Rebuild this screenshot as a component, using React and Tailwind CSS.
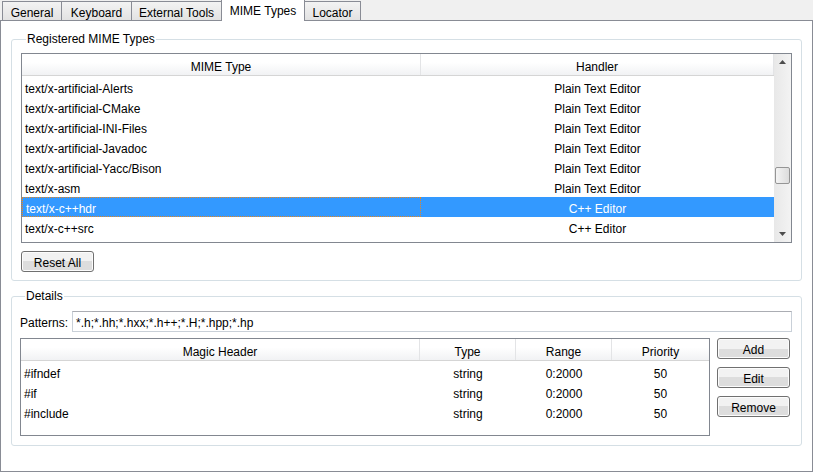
import React from "react";

const F = { fontFamily: '"Liberation Sans", Arial, sans-serif' };

function Tab({ label, w, selected }) {
  if (selected)
    return (
      <div className={`-ml-px relative z-10 h-[22px] ${w} border border-b-0 border-[#898c95] bg-white flex items-center justify-center pt-[1px] pb-[1px] text-black`}>
        {label}
      </div>
    );
  return (
    <div className={`-ml-px h-[19px] ${w} border border-b-0 border-[#898c95] bg-gradient-to-b from-[#f3f3f3] to-[#e2e2e2] flex items-center justify-center pt-[3px] text-black`}>
      {label}
    </div>
  );
}

function Header({ cols }) {
  return (
    <div className="flex h-[22px] border-b border-[#d5d5d5] bg-gradient-to-b from-white from-40% to-[#f1f2f4]">
      {cols.map((c, i) => (
        <div key={i} className={`${c.w} flex items-center justify-center pt-[4px] border-r border-[#e3e4e6] text-black`}>
          {c.label}
        </div>
      ))}
    </div>
  );
}

function Button({ children, w = "w-[73px]" }) {
  return (
    <div className={`${w} h-[21px] rounded-[3px] border border-[#707070] bg-gradient-to-b from-[#f2f2f2] from-50% to-[#dddddd] to-50% flex items-center justify-center pt-[2px] text-black shadow-[inset_0_0_0_1px_#fcfcfc]`}>
      {children}
    </div>
  );
}

const mimeRows = [
  ["text/x-artificial-Alerts", "Plain Text Editor"],
  ["text/x-artificial-CMake", "Plain Text Editor"],
  ["text/x-artificial-INI-Files", "Plain Text Editor"],
  ["text/x-artificial-Javadoc", "Plain Text Editor"],
  ["text/x-artificial-Yacc/Bison", "Plain Text Editor"],
  ["text/x-asm", "Plain Text Editor"],
  ["text/x-c++hdr", "C++ Editor", true],
  ["text/x-c++src", "C++ Editor"],
];

const magicRows = [
  ["#ifndef", "string", "0:2000", "50"],
  ["#if", "string", "0:2000", "50"],
  ["#include", "string", "0:2000", "50"],
];

export default function App() {
  return (
    <div style={F} className="w-[813px] h-[472px] bg-[#f0f0f0] text-[12px] leading-[14px] flex flex-col overflow-hidden">
      {/* Tabs */}
      <div className="h-[20px] flex items-end pl-[3px] relative z-10">
        <Tab label="General" w="w-[60px]" />
        <Tab label="Keyboard" w="w-[71px]" />
        <Tab label="External Tools" w="w-[91px]" />
        <div className="-mb-[1px] flex">
          <Tab label="MIME Types" w="w-[84px]" selected />
        </div>
        <Tab label="Locator" w="w-[57px]" />
      </div>
      {/* Pane */}
      <div className="w-[813px] h-[452px] border border-[#898c95] bg-white px-[10px] pt-[11px]">
        <fieldset className="border border-[#d5dfe5] rounded-[3px] px-[9px] pb-[8px] pt-[7px]">
          <legend className="ml-[5px] px-[1px] text-black">Registered MIME Types</legend>
          <div className="h-[190px] border border-[#828790] flex">
            <div className="flex-1 flex flex-col">
              <Header cols={[{ label: "MIME Type", w: "w-[399px]" }, { label: "Handler", w: "flex-1" }]} />
              <div className="pt-[1px]">
                {mimeRows.map(([a, b, sel], i) => (
                  <div key={i} className={`h-[20px] flex items-center ${sel ? "bg-[#3399ff] text-white" : "text-black"}`}>
                    <div className={`w-[399px] h-full flex items-center pl-[3px] pt-[4px] ${sel ? "border border-dotted border-[#e8871e]" : ""}`}>{a}</div>
                    <div className="flex-1 h-full flex items-center justify-center pt-[4px]">{b}</div>
                  </div>
                ))}
              </div>
            </div>
            {/* Scrollbar */}
            <div className="w-[17px] bg-gradient-to-r from-[#e8e8e8] to-[#f3f3f3] flex flex-col items-center justify-between py-[6px] relative">
              <svg width="7" height="4" viewBox="0 0 7 4"><path d="M0 4 L3.5 0 L7 4 Z" fill="#4d4d4d" /></svg>
              <svg width="7" height="4" viewBox="0 0 7 4"><path d="M0 0 L3.5 4 L7 0 Z" fill="#4d4d4d" /></svg>
              <div className="absolute left-[1px] top-[113px] w-[15px] h-[17px] rounded-[2px] border border-[#959595] bg-gradient-to-r from-[#f4f4f4] to-[#dcdcdc]" />
            </div>
          </div>
          <div className="mt-[8px]">
            <Button>Reset All</Button>
          </div>
        </fieldset>

        <fieldset className="mt-[8px] border border-[#d5dfe5] rounded-[3px] pl-[8px] pr-[9px] pb-[9px] pt-[8px]">
          <legend className="ml-[5px] px-[1px] text-black">Details</legend>
          <div className="flex items-center h-[21px]">
            <div className="w-[52px] pt-[3px] text-black">Patterns:</div>
            <div className="flex-1 h-[21px] border border-[#c9d0d8] border-t-[#abadb3] flex items-center pl-[3px] pt-[3px] text-black">
              *.h;*.hh;*.hxx;*.h++;*.H;*.hpp;*.hp
            </div>
          </div>
          <div className="mt-[6px] flex gap-[7px]">
            <div className="w-[690px] h-[98px] border border-[#828790] flex flex-col">
              <Header
                cols={[
                  { label: "Magic Header", w: "w-[399px]" },
                  { label: "Type", w: "w-[96px]" },
                  { label: "Range", w: "w-[96px]" },
                  { label: "Priority", w: "flex-1 border-r-0" },
                ]}
              />
              <div className="pt-[1px]">
                {magicRows.map(([a, b, c, d], i) => (
                  <div key={i} className="h-[20px] flex items-center pt-[4px] text-black">
                    <div className="w-[399px] pl-[3px]">{a}</div>
                    <div className="w-[96px] text-center">{b}</div>
                    <div className="w-[96px] text-center">{c}</div>
                    <div className="flex-1 text-center">{d}</div>
                  </div>
                ))}
              </div>
            </div>
            <div className="flex flex-col gap-[8px]">
              <Button>Add</Button>
              <Button>Edit</Button>
              <Button>Remove</Button>
            </div>
          </div>
        </fieldset>
      </div>
    </div>
  );
}
